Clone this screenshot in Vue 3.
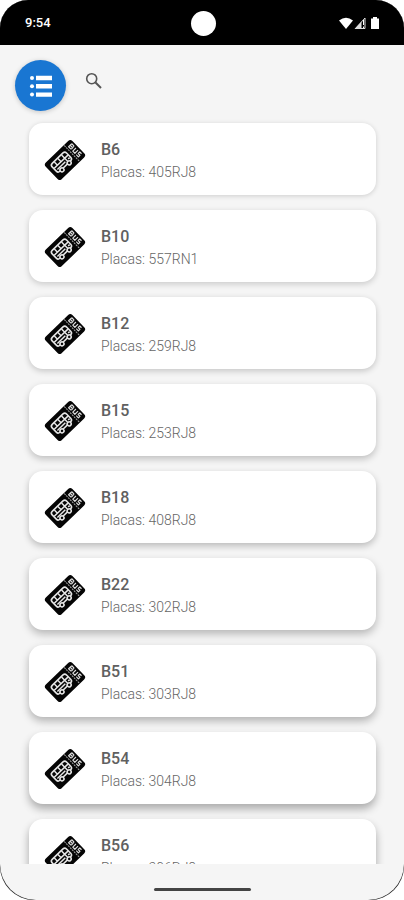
<script setup>
const vehicles = [
  { name: 'B6', plate: '405RJ8' },
  { name: 'B10', plate: '557RN1' },
  { name: 'B12', plate: '259RJ8' },
  { name: 'B15', plate: '253RJ8' },
  { name: 'B18', plate: '408RJ8' },
  { name: 'B22', plate: '302RJ8' },
  { name: 'B51', plate: '303RJ8' },
  { name: 'B54', plate: '304RJ8' },
  { name: 'B56', plate: '306RJ8' }
]

// Cards further down the screen cast a longer, darker shadow.
const shadow = (i) => ({
  boxShadow: `0 ${1 + Math.round(i / 2)}px ${5 + Math.round(i / 2)}px rgba(0, 0, 0, ${(16 + i * 2) / 100})`
})
</script>

<template>
  <div class="frame">
    <div class="screen">
      <header class="status">
        <span class="clock">9:54</span>
        <span class="camera"></span>
        <span class="signals">
          <svg width="42" height="14" viewBox="0 0 42 14" aria-hidden="true">
            <path d="M0 4.500Q7 -1 14 4.500L7 13Z" fill="#fff" />
            <path d="M16.500 12.500L26 2V12.500Z" fill="none" stroke="#ddd" stroke-width="1" />
            <path d="M15.500 13L22.500 5.500V13Z" fill="#ddd" />
            <path d="M24.500 4V9M24.500 10.500V12" stroke="#fff" stroke-width="1" />
            <path d="M32 2.500H34V1H38V2.500H40V13H32Z" fill="#fff" />
          </svg>
        </span>
      </header>

      <div class="toolbar">
        <button class="menu" type="button" aria-label="Menu">
          <svg width="24" height="24" viewBox="0 0 24 24" fill="#fff" aria-hidden="true">
            <circle cx="3" cy="4" r="2" /><circle cx="3" cy="12.300" r="2" /><circle cx="3" cy="20.600" r="2" />
            <path d="M7 1.800h16v4.400H7zM7 10.100h16v4.400H7zM7 18.400h16v4.400H7z" />
          </svg>
        </button>
        <button class="search" type="button" aria-label="Buscar">
          <svg width="18" height="18" viewBox="0 0 18 18" fill="none" stroke="#555" aria-hidden="true">
            <circle cx="6.700" cy="6.700" r="5" stroke-width="1.600" />
            <path d="M10.500 10.500L16 16" stroke-width="2" />
          </svg>
        </button>
      </div>

      <ul class="list">
        <li v-for="(v, i) in vehicles" :key="v.name" class="card" :style="shadow(i)">
          <svg class="ticket" width="42" height="42" viewBox="0 0 42 42" aria-hidden="true">
            <g transform="translate(21 22) rotate(-44)">
              <rect x="-18.500" y="-11.500" width="37" height="23" rx="3" fill="#050505" />
              <path d="M9.500 -11V11" stroke="#aaa" stroke-width="1" stroke-dasharray="2 0.800" />
              <rect x="-14" y="-6.500" width="20" height="11" rx="2.500" fill="none" stroke="#e6e6e6" stroke-width="1.600" />
              <path d="M-13.500 -1.500H5.500M-9 -6V-1.500M-4 -6V-1.500M1 -6V4.500M-12 1.500H-1M3 1.500H5" stroke="#e6e6e6" stroke-width="1.500" />
              <circle cx="-9" cy="5" r="2" fill="#050505" stroke="#e6e6e6" stroke-width="1.500" />
              <circle cx="1" cy="5" r="2" fill="#050505" stroke="#e6e6e6" stroke-width="1.500" />
              <!-- Lettering on the stub, running down its length -->
              <g transform="translate(14 0) rotate(90)" fill="none" stroke="#ddd" stroke-width="1.200" stroke-linejoin="round">
                <path d="M-7 -2.200V2.200H-4Q-2.500 1 -4 0H-7M-4 0Q-3 -1.500 -4 -2.200H-7" />
                <path d="M-1 -2.200V2.200H2V-2.200" />
                <path d="M7 -2.200H4.500V0H7V2.200H4" />
              </g>
            </g>
          </svg>
          <div class="info">
            <h2>{{ v.name }}</h2>
            <p>Placas: {{ v.plate }}</p>
          </div>
        </li>
      </ul>

      <footer class="nav"><span class="handle"></span></footer>
    </div>
  </div>
</template>

<style>
body {
  background: #fff;
}
</style>

<style scoped>
.frame {
  height: 100vh;
  background: #222;
  border-radius: 28px 28px 34px 34px;
  overflow: hidden;
  font-family: Roboto, "Liberation Sans", sans-serif;
}
.screen {
  display: flex;
  flex-direction: column;
  height: 100%;
  background: #f5f5f5;
  border-radius: 0 0 36px 36px;
  overflow: hidden;
}
.status {
  display: grid;
  grid-template-columns: 1fr auto 1fr;
  align-items: center;
  flex: none;
  height: 45px;
  box-sizing: border-box;
  padding: 1px 23px 0 25px;
  background: #000;
  color: #fff;
}
.clock {
  font-size: 13px;
  line-height: 16px;
  font-weight: 500;
}
.camera {
  width: 25px;
  height: 25px;
  border-radius: 50%;
  background: #fff;
}
.signals {
  display: flex;
  justify-content: flex-end;
}
.toolbar {
  display: flex;
  align-items: flex-start;
  gap: 19px;
  flex: none;
  padding: 15px 15px 0;
}
button {
  display: flex;
  align-items: center;
  justify-content: center;
  padding: 0;
  border: 0;
  background: none;
}
.menu {
  width: 51px;
  height: 51px;
  border-radius: 50%;
  background: #1976d2;
  box-shadow: 0 1px 5px rgba(0, 0, 0, 0.2);
}
.search {
  height: 42px;
}
.list {
  display: flex;
  flex-direction: column;
  gap: 15px;
  flex: 1;
  min-height: 0;
  margin: 0;
  padding: 12px 28px 0 29px;
  list-style: none;
  overflow-y: auto;
  scrollbar-width: none;
}
.card {
  display: flex;
  align-items: center;
  gap: 15px;
  flex: none;
  height: 72px;
  box-sizing: border-box;
  padding: 0 15px;
  border-radius: 14px;
  background: #fff;
}
.ticket {
  flex: none;
}
.info {
  padding-top: 4px;
}
h2 {
  margin: 0;
  font-size: 16px;
  line-height: 22px;
  font-weight: 500;
  color: #606060;
}
p {
  margin: 0;
  font-size: 14px;
  line-height: 22px;
  font-weight: 300;
  color: #666;
}
.nav {
  display: flex;
  justify-content: center;
  align-items: center;
  flex: none;
  height: 36px;
  box-sizing: border-box;
  padding-top: 14px;
}
.handle {
  width: 97px;
  height: 3px;
  border-radius: 2px;
  background: #444;
}
</style>
